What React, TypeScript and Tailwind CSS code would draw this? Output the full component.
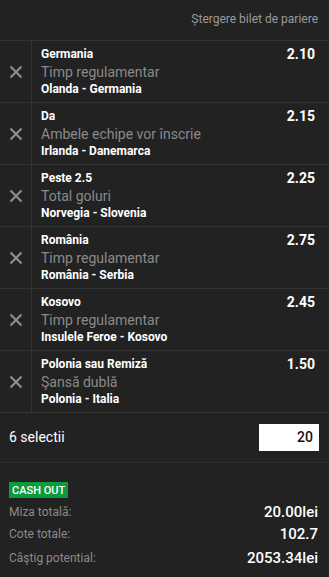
import React from 'react';

interface Selection {
  pick: string;
  market: string;
  match: string;
  odds: string;
}

const selections: Selection[] = [
  { pick: 'Germania', market: 'Timp regulamentar', match: 'Olanda - Germania', odds: '2.10' },
  { pick: 'Da', market: 'Ambele echipe vor înscrie', match: 'Irlanda - Danemarca', odds: '2.15' },
  { pick: 'Peste 2.5', market: 'Total goluri', match: 'Norvegia - Slovenia', odds: '2.25' },
  { pick: 'România', market: 'Timp regulamentar', match: 'România - Serbia', odds: '2.75' },
  { pick: 'Kosovo', market: 'Timp regulamentar', match: 'Insulele Feroe - Kosovo', odds: '2.45' },
  { pick: 'Polonia sau Remiză', market: 'Şansă dublă', match: 'Polonia - Italia', odds: '1.50' },
];

const CloseIcon = () => (
  <svg width="14" height="14" viewBox="0 0 14 14" fill="none">
    <path d="M1.5 1.5L12.5 12.5M12.5 1.5L1.5 12.5" stroke="#8c8c8c" strokeWidth="2.2" />
  </svg>
);

const SelectionRow: React.FC<{ item: Selection }> = ({ item }) => (
  <div className="flex h-[62px] border-b border-[#333333]">
    <div className="w-[32px] shrink-0 border-r border-[#333333] flex items-center justify-center pl-[1px]">
      <CloseIcon />
    </div>
    <div className="flex-1 pl-[9px] pr-[14px] pt-[6px] flex justify-between">
      <div className="flex flex-col">
        <span className="text-[12px] leading-[14px] font-bold text-white">{item.pick}</span>
        <span className="mt-[2px] text-[14px] leading-[18px] text-[#8a8a8a]">{item.market}</span>
        <span className="mt-[1px] text-[12px] leading-[14px] font-bold text-white">{item.match}</span>
      </div>
      <span className="text-[14px] leading-[14px] font-bold text-white">{item.odds}</span>
    </div>
  </div>
);

export default function App() {
  return (
    <div className="w-[329px] h-[577px] bg-[#222222] font-['Roboto',sans-serif] overflow-hidden">
      <div className="h-[41px] border-b border-[#333333] flex items-center justify-end pr-[11px] pb-[2px]">
        <span className="text-[12px] text-[#9a9a9a]">Ștergere bilet de pariere</span>
      </div>
      {selections.map((s) => (
        <SelectionRow key={s.pick} item={s} />
      ))}
      <div className="h-[50px] border-b border-[#2e2e2e] flex items-center justify-between pl-[9px] pr-[10px]">
        <span className="text-[14px] text-white">6 selectii</span>
        <div className="w-[60px] h-[27px] bg-white flex items-center justify-end pr-[6px]">
          <span className="text-[14px] font-medium text-[#111111]">20</span>
        </div>
      </div>
      <div className="pt-[19px] pl-[9px] pr-[11px]">
        <div className="flex">
          <span className="flex items-center h-[16px] px-[3px] bg-[#0b9a3c] text-white text-[11px] font-medium leading-none">
            CASH OUT
          </span>
        </div>
        <div className="mt-[3px] flex flex-col">
          <div className="flex justify-between items-center h-[22px]">
            <span className="text-[12px] text-[#8a8a8a]">Miza totală:</span>
            <span className="text-[15px] font-medium text-white">20.00lei</span>
          </div>
          <div className="flex justify-between items-center h-[22px]">
            <span className="text-[12px] text-[#8a8a8a]">Cote totale:</span>
            <span className="text-[15px] font-medium text-white">102.7</span>
          </div>
          <div className="mt-[2px] flex justify-between items-center h-[22px]">
            <span className="text-[12px] text-[#8a8a8a]">Câştig potential:</span>
            <span className="text-[15px] font-medium text-white">2053.34lei</span>
          </div>
        </div>
      </div>
    </div>
  );
}
